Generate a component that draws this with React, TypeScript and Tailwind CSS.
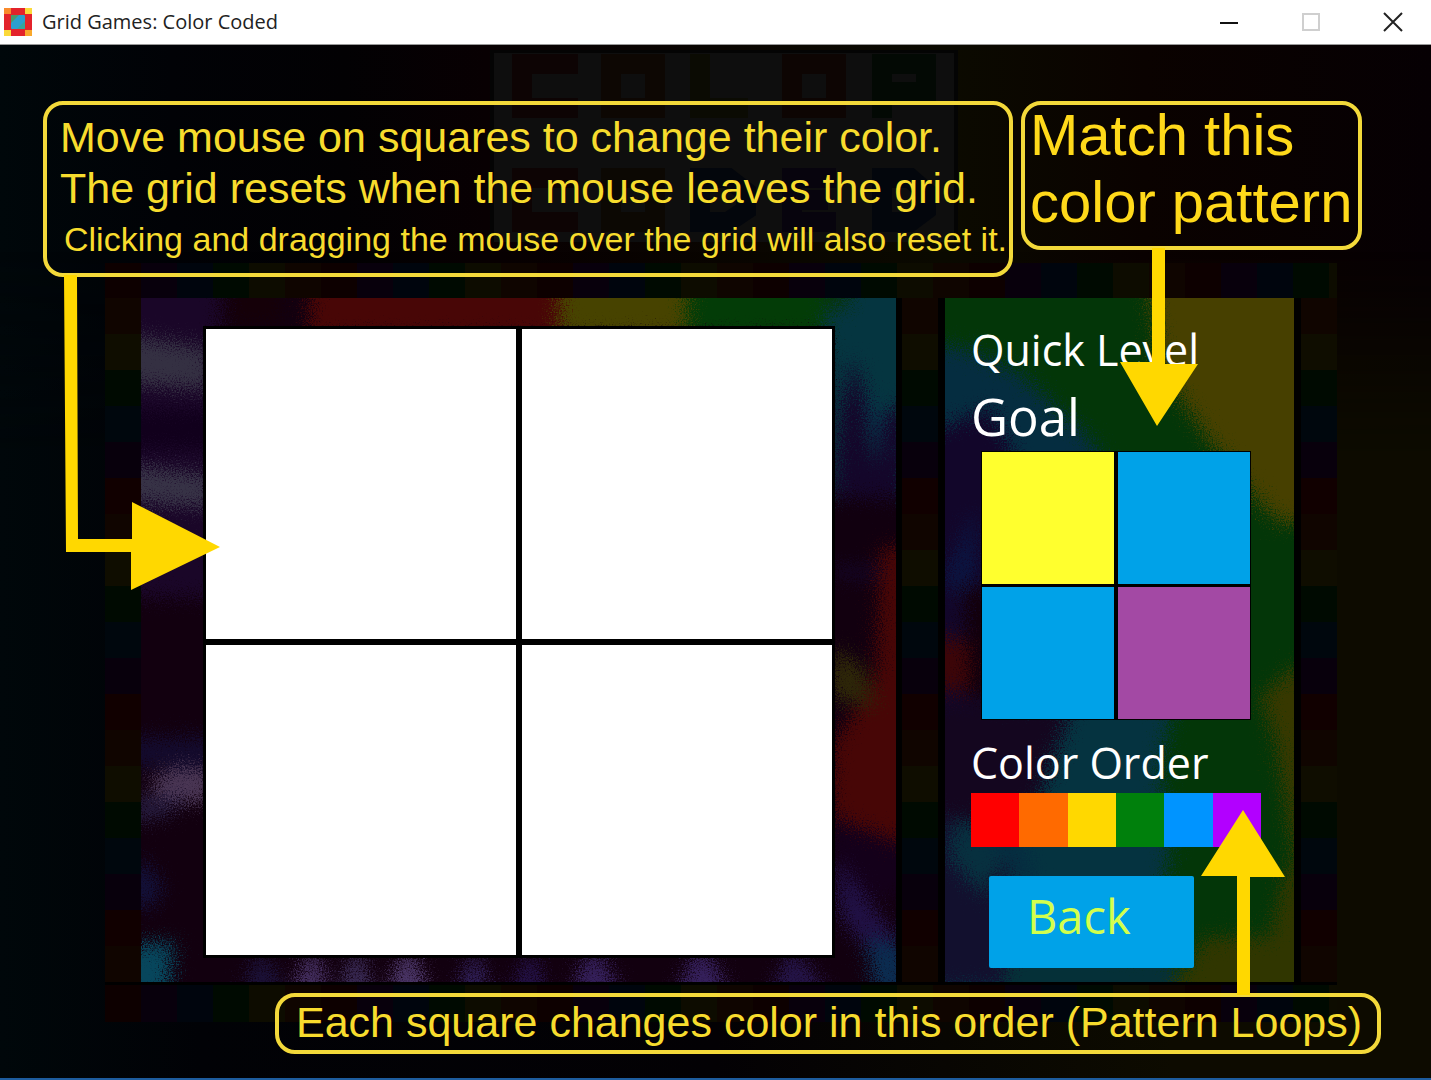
import React, { useState } from "react";

const ORDER = [
  { name: "red", bg: "bg-[#ff0000]" },
  { name: "orange", bg: "bg-[#ff6a00]" },
  { name: "yellow", bg: "bg-[#ffd800]" },
  { name: "green", bg: "bg-[#00800c]" },
  { name: "blue", bg: "bg-[#0094ff]" },
  { name: "purple", bg: "bg-[#b200ff]" },
];

const GOAL = ["bg-[#ffff2e]", "bg-[#00a2e8]", "bg-[#00a2e8]", "bg-[#a349a4]"];

const AppIcon: React.FC = () => (
  <svg viewBox="0 0 28 28" className="w-7 h-7">
    <rect width="28" height="28" fill="#e3232b" />
    <rect width="7" height="6" fill="#f98a2c" />
    <rect x="21" width="7" height="6" fill="#fbd93a" />
    <rect y="22" width="7" height="6" fill="#fbd93a" />
    <rect x="21" y="22" width="7" height="6" fill="#f9a82c" />
    <rect x="7" y="7" width="14" height="14" rx="1" fill="#2a9fd0" />
    <path d="M7 7H15L7 15Z" fill="#4a9a6c" />
    <path d="M21 13V21H13Z" fill="#35a59a" />
  </svg>
);

const TitleBar: React.FC = () => (
  <header className="h-[45px] shrink-0 flex items-center justify-between bg-white border-b border-[#999999] pl-1">
    <div className="flex items-center gap-[10px]">
      <AppIcon />
      <h1 className="text-[20px] leading-7 text-[#222222]">
        Grid Games: Color Coded
      </h1>
    </div>
    <div className="flex -mr-[3px]">
      <button aria-label="Minimize" className="w-[82px] h-11 flex items-center justify-center">
        <svg viewBox="0 0 20 20" className="w-5 h-5">
          <path d="M1 11H19" stroke="#111" strokeWidth="2" />
        </svg>
      </button>
      <button aria-label="Maximize" disabled className="w-[82px] h-11 flex items-center justify-center">
        <svg viewBox="0 0 20 20" className="w-5 h-5">
          <rect x="2" y="2" width="16" height="16" fill="none" stroke="#cfcfcf" strokeWidth="2" />
        </svg>
      </button>
      <button aria-label="Close" className="w-[82px] h-11 flex items-center justify-center">
        <svg viewBox="0 0 20 20" className="w-5 h-5">
          <path d="M1 1L19 19M19 1L1 19" stroke="#222" strokeWidth="2" />
        </svg>
      </button>
    </div>
  </header>
);

// dimmed block logo behind the instructions
const DimLogo: React.FC = () => (
  <svg
    viewBox="0 0 468 192"
    className="absolute top-[5px] left-1/2 -ml-[226px] w-[468px] h-[192px]"
  >
    <rect width="468" height="192" fill="#0e0e0e" />
    <g fill="none" strokeWidth="20">
      <path d="M88 14H32V58H88" stroke="#0d0404" />
      <path d="M121 14H165V58H121Z" stroke="#0d0703" />
      <path d="M210 4V58H258" stroke="#0b0b03" />
      <path d="M302 14H346V58H302Z" stroke="#0d0503" />
      <path d="M392 68V14H436V42H400" stroke="#030904" />
      <path d="M88 128H32V172H88" stroke="#0d0404" />
      <path d="M121 128H165V172H121Z" stroke="#0c0803" />
      <path d="M210 128H238L256 142V160L238 172H210Z" stroke="#03060c" />
      <path d="M346 128H302V172H346M302 150H338" stroke="#07040d" />
      <path d="M392 128H420L436 142V160L420 172H392Z" stroke="#03060c" />
    </g>
    <path d="M2 0V192M466 0V192M0 1H468" stroke="#040404" strokeWidth="4" />
  </svg>
);

const ColumnTiles: React.FC = () => (
  <div className="w-9 shrink-0 bg-[repeating-linear-gradient(to_bottom,#100500_0_36px,#0f0d00_36px_72px,#000a01_72px_108px,#00070d_108px_144px,#08000c_144px_180px,#110000_180px_216px)]"></div>
);

const RowTiles: React.FC<{ className: string }> = ({ className }) => (
  <div
    className={
      "bg-[repeating-linear-gradient(to_right,#0d0000_0_36px,#08000c_36px_72px,#00050d_72px_108px,#000a01_108px_144px,#0d0c00_144px_180px,#0f0500_180px_216px)] " +
      className
    }
  ></div>
);

const DyeFilter: React.FC<{ id: string }> = ({ id }) => (
  <filter id={id} x="-5%" y="-5%" width="110%" height="110%" colorInterpolationFilters="sRGB">
    <feGaussianBlur stdDeviation="7" result="soft" />
    <feTurbulence type="fractalNoise" baseFrequency="0.7" numOctaves="2" seed="4" result="grain" />
    <feDisplacementMap in="soft" in2="grain" scale="48" xChannelSelector="R" yChannelSelector="G" />
  </filter>
);

const BoardDye: React.FC = () => (
  <svg
    viewBox="0 0 755 685"
    preserveAspectRatio="none"
    className="absolute inset-0 w-full h-full"
  >
    <defs>
      <DyeFilter id="dyeBoard" />
    </defs>
    <rect width="755" height="685" fill="#12000f" />
    <g filter="url(#dyeBoard)">
      <rect x="-40" y="-40" width="840" height="770" fill="#12000f" />
      <rect x="-40" y="-40" width="120" height="340" fill="#1a0628" />
      <path d="M-40 32L70 52V92L-40 84Z" fill="#343042" />
      <path d="M-40 165L70 178V210L-40 200Z" fill="#373346" />
      <rect x="-40" y="112" width="120" height="40" fill="#11001c" />
      <rect x="-40" y="440" width="120" height="30" fill="#130a2c" />
      <ellipse cx="45" cy="488" rx="34" ry="17" fill="#4a3654" />
      <path d="M-10 500L50 500L20 520L-10 525Z" fill="#241a3c" />
      <path d="M0 560L22 590L8 612L-20 600Z" fill="#121038" />
      <path d="M-20 650L32 645L26 710H-20Z" fill="#07465c" />
      <rect x="90" y="-30" width="50" height="56" fill="#150008" />
      <rect x="168" y="-40" width="250" height="80" fill="#480606" />
      <rect x="418" y="-40" width="130" height="80" fill="#474300" />
      <rect x="546" y="-40" width="140" height="80" fill="#033c07" />
      <rect x="684" y="-40" width="116" height="240" fill="#053540" />
      <rect x="684" y="-40" width="24" height="50" fill="#05330f" />
      <path d="M690 220L700 110L712 60L724 100L732 170L742 120L765 100V280H690Z" fill="#14062a" />
      <path d="M728 90L742 170L738 120Z" fill="#06345a" />
      <path d="M690 200H800V270H690Z" fill="#11000f" />
      <path d="M740 250H800V545H710L690 515V450L735 380Z" fill="#470606" />
      <path d="M690 350L722 370L735 410L690 400Z" fill="#2d2608" />
      <path d="M690 520L770 550V600H690Z" fill="#14001a" />
      <path d="M694 560L755 640L755 690L700 620Z" fill="#201044" />
      <path d="M725 640L765 650V700H735Z" fill="#0b2c50" />
      <path d="M100 700L120 650L145 700Z" fill="#1b1138" />
      <path d="M150 700L172 645L188 700Z" fill="#453062" />
      <path d="M198 700L216 645L232 700Z" fill="#3b2c58" />
      <path d="M244 700L268 645L288 700Z" fill="#4b3668" />
      <path d="M315 700L335 650L348 700Z" fill="#30205a" />
      <path d="M370 700L390 650L405 700Z" fill="#24124a" />
      <path d="M430 700L452 645L480 700Z" fill="#35205c" />
      <path d="M535 700L560 645L590 700Z" fill="#35205c" />
      <path d="M630 700L650 650L690 700Z" fill="#241448" />
    </g>
  </svg>
);

const SideDye: React.FC = () => (
  <svg
    viewBox="0 0 349 685"
    preserveAspectRatio="none"
    className="absolute inset-0 w-full h-full"
  >
    <defs>
      <DyeFilter id="dyeSide" />
    </defs>
    <rect width="349" height="685" fill="#033508" />
    <g filter="url(#dyeSide)">
      <rect x="-40" y="-40" width="440" height="770" fill="#033608" />
      <path d="M200 -40H400V225H335L310 200L262 140L215 70Z" fill="#474000" />
      <path d="M-40 45L20 50L75 75L110 110L140 135L160 165L160 720H-40Z" fill="#052d40" />
      <path d="M-40 145L45 110L70 160L50 300V480H-40Z" fill="#12062a" />
      <path d="M0 280L30 210V280L10 300Z" fill="#0b1440" />
      <path d="M20 290H60V400H20Z" fill="#12000c" />
      <path d="M-30 335L24 345V395L-30 390Z" fill="#3c0508" />
      <path d="M-30 410L160 400L150 470L80 530L-30 520Z" fill="#14061f" />
      <path d="M130 400H230L215 470L225 560L210 620H100L80 540Z" fill="#053340" />
      <path d="M-30 500L60 560L80 690H-30Z" fill="#12102e" />
      <path d="M10 520L60 560L40 600L4 560Z" fill="#07303f" />
      <path d="M60 655H230V720H60Z" fill="#053038" />
      <path d="M349 370L315 400L330 440L349 560H400V370Z" fill="#373800" />
      <path d="M349 560L338 580L325 640L260 640L215 710H400V560Z" fill="#303600" />
      <path d="M240 440L300 430L315 620L240 640Z" fill="#033608" />
    </g>
  </svg>
);

const Board: React.FC = () => {
  const [steps, setSteps] = useState<number[]>([-1, -1, -1, -1]);

  const handleEnter = (index: number) => {
    setSteps((prev) =>
      prev.map((s, i) => (i === index ? (s + 1) % ORDER.length : s))
    );
  };

  const handleReset = () => {
    setSteps([-1, -1, -1, -1]);
  };

  return (
    <section className="relative flex-1 pl-[62px] pr-[61px] pt-7 pb-6">
      <BoardDye />
      <div
        onMouseLeave={handleReset}
        className="relative grid grid-cols-2 gap-[6px] p-[3px] bg-black"
      >
        {steps.map((step, index) => (
          <button
            key={index}
            aria-label={`Square ${index + 1}`}
            onMouseEnter={() => handleEnter(index)}
            onMouseDown={handleReset}
            className={"aspect-square " + (step < 0 ? "bg-white" : ORDER[step].bg)}
          ></button>
        ))}
      </div>
    </section>
  );
};

const SidePanel: React.FC = () => (
  <section className="relative w-[363px] shrink-0 border-x-[7px] border-black">
    <SideDye />
    <div className="relative pl-[26px] pt-5 text-white">
      <h2 className="text-[43px] leading-[63px]">Quick Level</h2>
      <h3 className="text-[51px] leading-[70px]">Goal</h3>
      <div className="ml-[10px] w-[270px] grid grid-cols-2 gap-x-1 gap-y-[3px] bg-black border border-black">
        {GOAL.map((color, index) => (
          <div key={index} className={"aspect-square " + color}></div>
        ))}
      </div>
      <h3 className="mt-[13px] text-[43px] leading-[60px]">Color Order</h3>
      <div className="flex w-[290px] h-[54px]">
        {ORDER.map((color) => (
          <div key={color.name} className={"flex-1 " + color.bg}></div>
        ))}
      </div>
      <button className="mt-[29px] ml-[18px] w-[205px] h-[92px] pl-[38px] pb-3 text-left text-[47px] leading-[80px] bg-[#00a2e8] text-[#d3ff4d] rounded-xs">
        Back
      </button>
    </div>
  </section>
);

const App: React.FC = () => {
  return (
    <div className="min-h-screen flex flex-col font-['Open_Sans',sans-serif]">
      <TitleBar />
      <main className="relative flex-1 pt-14 pb-6 border-b-[3px] border-[#1d5c9e] bg-[linear-gradient(to_right,#00070a_0%,#010206_12%,#020103_24%,#080002_34%,#0b0a00_66%,#0a0200_80%,#060003_100%)]">
        <div className="absolute inset-0 bg-[linear-gradient(to_right,#00070a_0%,#010206_14%,#030104_50%,#0d0b00_82%,#0d0b00_100%)] mask-t-from-60% mask-t-to-80%"></div>
        <DimLogo />

        <div className="relative z-10 flex items-start gap-2 pl-[43px] pr-[69px] font-['Liberation_Sans',sans-serif] text-[#f7dc2d] pointer-events-none">
          <div className="relative flex-1 border-4 border-[#f3d93a] rounded-[20px] pt-[7px] pb-2 pl-[13px] whitespace-nowrap">
            <p className="text-[43px] leading-[51px]">
              Move mouse on squares to change their color.
            </p>
            <p className="text-[43px] leading-[51px]">
              The grid resets when the mouse leaves the grid.
            </p>
            <p className="pl-1 text-[34px] leading-[51px]">
              Clicking and dragging the mouse over the grid will also reset it.
            </p>
            <svg viewBox="0 0 162 320" className="absolute top-full left-[13px] w-[162px] h-[320px]">
              <path
                d="M4 2H17L18 266H72V229L160 274L71 317V279H6Z"
                fill="#ffd800"
              />
            </svg>
          </div>
          <div className="relative w-[341px] border-4 border-[#f3d93a] rounded-[20px] pb-[11px] pl-[5px] whitespace-nowrap">
            <p className="-mt-1 text-[58px] leading-[67px] text-[#ffd91a]">
              Match this
              <br />
              color pattern
            </p>
            <svg viewBox="0 0 90 182" className="absolute top-full left-[90px] w-[90px] h-[182px]">
              <path d="M37 2H50V118H83L42 180L5 116H37Z" fill="#ffd800" />
            </svg>
          </div>
        </div>

        <div className="relative -mt-[14px] ml-[105px] mr-[94px]">
          <RowTiles className="h-[35px]" />
          <div className="flex">
            <ColumnTiles />
            <Board />
            <div className="w-[6px] bg-black"></div>
            <ColumnTiles />
            <SidePanel />
            <ColumnTiles />
          </div>
          <RowTiles className="h-10 border-t-3 border-black" />
        </div>

        <div className="relative z-10 -mt-[29px] ml-[275px] mr-[50px] border-4 border-[#f3d93a] rounded-[20px] pl-[17px] pt-px pb-1 whitespace-nowrap font-['Liberation_Sans',sans-serif] text-[#f7dc2d] pointer-events-none">
          <p className="text-[43px] leading-[48px]">
            Each square changes color in this order (Pattern Loops)
          </p>
          <svg viewBox="0 0 90 190" className="absolute bottom-full right-[89px] w-[90px] h-[190px]">
            <path d="M45 3L87 70H52V188H39V69H3Z" fill="#ffd800" />
          </svg>
        </div>
      </main>
    </div>
  );
};

export default App;
